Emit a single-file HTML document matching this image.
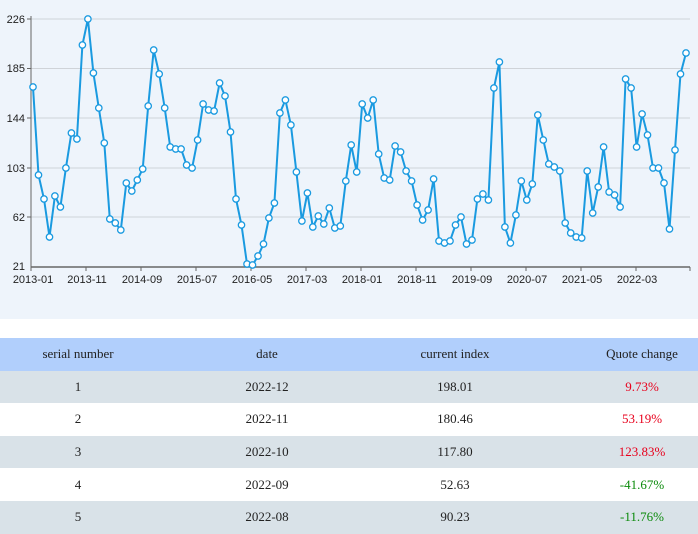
<!DOCTYPE html>
<html><head><meta charset="utf-8"><style>
body{margin:0;width:698px;height:533px;overflow:hidden;background:#fff;font-family:"Liberation Serif",serif;}
.chart{position:absolute;left:0;top:0;width:698px;height:319px;background:#eef4fb;}
table{position:absolute;left:0;top:338px;width:698px;border-collapse:collapse;font-size:13px;color:#222;table-layout:fixed;}
td,th{height:32.6px;padding:0;text-align:center;font-weight:normal;}
th{background:#b1cffc;}
tr.g td{background:#d9e2e8;}
.c4{padding-left:54px;}
.r{color:#e8001c}.gr{color:#0a8a0a}
</style></head><body>
<div class="chart">
<svg width="698" height="319" style="position:absolute;left:0;top:0">
<g stroke="#cfd3d8" stroke-width="1">
<line x1="31" y1="19" x2="690" y2="19"/><line x1="31" y1="68.5" x2="690" y2="68.5"/><line x1="31" y1="118" x2="690" y2="118"/><line x1="31" y1="168" x2="690" y2="168"/><line x1="31" y1="217" x2="690" y2="217"/>
</g>
<line x1="31" y1="16" x2="31" y2="267" stroke="#666" stroke-width="1"/>
<line x1="31" y1="267" x2="690" y2="267" stroke="#666" stroke-width="1.5"/>
<g stroke="#666"><line x1="31" y1="267" x2="31" y2="271"/><line x1="86" y1="267" x2="86" y2="271"/><line x1="141" y1="267" x2="141" y2="271"/><line x1="196" y1="267" x2="196" y2="271"/><line x1="251" y1="267" x2="251" y2="271"/><line x1="306" y1="267" x2="306" y2="271"/><line x1="361" y1="267" x2="361" y2="271"/><line x1="416" y1="267" x2="416" y2="271"/><line x1="471" y1="267" x2="471" y2="271"/><line x1="526" y1="267" x2="526" y2="271"/><line x1="581" y1="267" x2="581" y2="271"/><line x1="636" y1="267" x2="636" y2="271"/><line x1="690" y1="267" x2="690" y2="271"/><line x1="27" y1="19" x2="31" y2="19"/><line x1="27" y1="68.5" x2="31" y2="68.5"/><line x1="27" y1="118" x2="31" y2="118"/><line x1="27" y1="168" x2="31" y2="168"/><line x1="27" y1="217" x2="31" y2="217"/></g>
<g font-family="Liberation Sans,sans-serif" font-size="11" fill="#222">
<g text-anchor="end"><text x="25" y="23">226</text><text x="25" y="72">185</text><text x="25" y="122">144</text><text x="25" y="172">103</text><text x="25" y="221">62</text><text x="25" y="270">21</text></g>
<g text-anchor="middle"><text x="33" y="283">2013-01</text><text x="87" y="283">2013-11</text><text x="142" y="283">2014-09</text><text x="197" y="283">2015-07</text><text x="252" y="283">2016-05</text><text x="307" y="283">2017-03</text><text x="362" y="283">2018-01</text><text x="417" y="283">2018-11</text><text x="472" y="283">2019-09</text><text x="527" y="283">2020-07</text><text x="582" y="283">2021-05</text><text x="637" y="283">2022-03</text></g>
</g>
<polyline id="pl" fill="none" stroke="#1a9ae0" stroke-width="2" points=""/>
<g id="pts" fill="#fff" stroke="#1a9ae0" stroke-width="1.3"></g>
</svg>
</div>
<table>
<colgroup><col style="width:156px"><col style="width:222px"><col style="width:154px"><col style="width:166px"></colgroup>
<tr><th>serial number</th><th>date</th><th>current index</th><th class="c4">Quote change</th></tr>
<tr class="g"><td>1</td><td>2022-12</td><td>198.01</td><td class="c4 r">9.73%</td></tr>
<tr><td>2</td><td>2022-11</td><td>180.46</td><td class="c4 r">53.19%</td></tr>
<tr class="g"><td>3</td><td>2022-10</td><td>117.80</td><td class="c4 r">123.83%</td></tr>
<tr><td>4</td><td>2022-09</td><td>52.63</td><td class="c4 gr">-41.67%</td></tr>
<tr class="g"><td>5</td><td>2022-08</td><td>90.23</td><td class="c4 gr">-11.76%</td></tr>
</table>
<script>
var y=[87,175,199,237,196,207,168,133,139,45,19,73,108,143,219,223,230,183,191,180,169,106,50,74,108,147,149,149,165,168,140,104,110,111,83,96,132,199,225,264,265,256,244,218,203,113,100,125,172,221,193,227,216,224,208,228,226,181,145,172,104,118,100,154,178,180,146,152,171,181,205,220,210,179,241,243,241,225,217,244,240,199,194,200,88,62,227,243,215,181,200,184,115,140,164,167,171,223,233,237,238,171,213,187,147,192,195,207,79,88,147,114,135,168,168,183,229,150,74,53];
var p=[],g='';for(var i=0;i<y.length;i++){var x=(33+5.487*i).toFixed(1);p.push(x+','+y[i]);g+='<circle cx="'+x+'" cy="'+y[i]+'" r="3.2"/>';}
document.getElementById('pl').setAttribute('points',p.join(' '));
document.getElementById('pts').innerHTML=g;
</script>
</body></html>
